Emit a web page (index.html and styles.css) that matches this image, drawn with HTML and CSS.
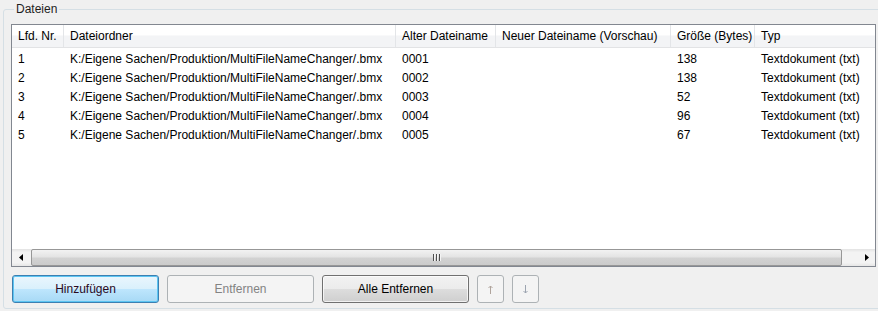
FILE: index.html
```html
<!DOCTYPE html>
<html lang="de">
<head>
    <meta charset="UTF-8">
    <title>Dateien</title>
    <link rel="stylesheet" href="styles.css">
</head>
<body>
    <fieldset class="group">
        <legend>Dateien</legend>
        <div class="listbox">
            <div class="list-head">
                <div class="col c1">Lfd. Nr.</div>
                <div class="col c2">Dateiordner</div>
                <div class="col c3">Alter Dateiname</div>
                <div class="col c4">Neuer Dateiname (Vorschau)</div>
                <div class="col c5">Größe (Bytes)</div>
                <div class="col c6">Typ</div>
            </div>
            <div class="list-body">
                <div class="row">
                    <div class="col c1">1</div>
                    <div class="col c2">K:/Eigene Sachen/Produktion/MultiFileNameChanger/.bmx</div>
                    <div class="col c3">0001</div>
                    <div class="col c4"></div>
                    <div class="col c5">138</div>
                    <div class="col c6">Textdokument (txt)</div>
                </div>
                <div class="row">
                    <div class="col c1">2</div>
                    <div class="col c2">K:/Eigene Sachen/Produktion/MultiFileNameChanger/.bmx</div>
                    <div class="col c3">0002</div>
                    <div class="col c4"></div>
                    <div class="col c5">138</div>
                    <div class="col c6">Textdokument (txt)</div>
                </div>
                <div class="row">
                    <div class="col c1">3</div>
                    <div class="col c2">K:/Eigene Sachen/Produktion/MultiFileNameChanger/.bmx</div>
                    <div class="col c3">0003</div>
                    <div class="col c4"></div>
                    <div class="col c5">52</div>
                    <div class="col c6">Textdokument (txt)</div>
                </div>
                <div class="row">
                    <div class="col c1">4</div>
                    <div class="col c2">K:/Eigene Sachen/Produktion/MultiFileNameChanger/.bmx</div>
                    <div class="col c3">0004</div>
                    <div class="col c4"></div>
                    <div class="col c5">96</div>
                    <div class="col c6">Textdokument (txt)</div>
                </div>
                <div class="row">
                    <div class="col c1">5</div>
                    <div class="col c2">K:/Eigene Sachen/Produktion/MultiFileNameChanger/.bmx</div>
                    <div class="col c3">0005</div>
                    <div class="col c4"></div>
                    <div class="col c5">67</div>
                    <div class="col c6">Textdokument (txt)</div>
                </div>
            </div>
            <div class="hscroll">
                <div class="sb-btn">
                    <svg width="4" height="7" viewBox="0 0 4 7"><path d="M4 0 L0 3.5 L4 7 Z" fill="#000"/></svg>
                </div>
                <div class="sb-track">
                    <div class="sb-thumb">
                        <span class="grip"></span><span class="grip"></span><span class="grip"></span>
                    </div>
                </div>
                <div class="sb-btn">
                    <svg width="4" height="7" viewBox="0 0 4 7"><path d="M0 0 L4 3.5 L0 7 Z" fill="#000"/></svg>
                </div>
            </div>
        </div>
        <div class="buttons">
            <button class="btn default">Hinzufügen</button>
            <button class="btn" disabled>Entfernen</button>
            <button class="btn">Alle Entfernen</button>
            <button class="btn small" disabled>
                <svg width="5" height="9" viewBox="0 0 5 9"><path d="M2.5 1 V9 M0.5 3 L2.5 1 L4.5 3" stroke="#b0a49c" fill="none"/></svg>
            </button>
            <button class="btn small" disabled>
                <svg width="5" height="9" viewBox="0 0 5 9"><path d="M2.5 0 V8 M0.5 6 L2.5 8 L4.5 6" stroke="#9ca4b0" fill="none"/></svg>
            </button>
        </div>
    </fieldset>
</body>
</html>
```

FILE: styles.css
```css
body {
    margin: 0;
    background: #f0f0f0;
    font-family: "Liberation Sans", Arial, sans-serif;
    font-size: 12px;
    color: #000;
}
.group {
    margin: 2px 4px 2px 3px;
    padding: 7px 7px 7px 7px;
    height: 307px;
    box-sizing: border-box;
    border: 1px solid #d5dfe5;
    border-radius: 3px;
    display: flex;
    flex-direction: column;
}
.group legend {
    padding: 0 2px;
    margin-left: 3px;
    line-height: 15px;
    color: #1e1e1e;
}
.listbox {
    flex: none;
    height: 243px;
    box-sizing: border-box;
    border: 1px solid #828790;
    background: #fff;
    display: flex;
    flex-direction: column;
}
.list-head {
    display: flex;
    height: 22px;
    background: linear-gradient(#ffffff, #ffffff 45%, #f3f4f6 50%, #f3f4f6);
    border-bottom: 1px solid #e2e3e5;
    line-height: 22px;
    white-space: nowrap;
    overflow: hidden;
}
.list-head .col {
    border-right: 1px solid #e3e5e8;
}
.list-body {
    flex: 1;
    padding-top: 2px;
    white-space: nowrap;
    overflow: hidden;
}
.row {
    display: flex;
    height: 19px;
    line-height: 19px;
}
.col {
    flex: none;
    box-sizing: border-box;
    padding-left: 6px;
    overflow: hidden;
}
.c1 { width: 52px; }
.c2 { width: 332px; }
.c3 { width: 100px; }
.c4 { width: 175px; }
.c5 { width: 84px; }
.c6 { width: 120px; }
.list-head .c6 { border-right: none; }

.hscroll {
    flex: none;
    display: flex;
    height: 17px;
    background: linear-gradient(#e3e3e3, #f3f3f3 20%, #f3f3f3 80%, #e6e6e6);
}
.sb-btn {
    width: 17px;
    flex: none;
    display: flex;
    align-items: center;
    justify-content: center;
}
.sb-track {
    flex: 1;
    display: flex;
    padding: 0 16px 0 2px;
}
.sb-thumb {
    flex: 1;
    box-sizing: border-box;
    border: 1px solid #979797;
    border-radius: 2px;
    background: linear-gradient(#f2f2f2, #e4e4e4 45%, #d2d2d2 55%, #cbcbcb);
    display: flex;
    justify-content: center;
    align-items: center;
    gap: 1px;
}
.grip {
    width: 1px;
    height: 7px;
    background: #4f4f4f;
    border-right: 1px solid #f4f4f4;
}

.buttons {
    display: flex;
    gap: 8px;
    margin-top: 8px;
    margin-left: 1px;
}
.btn {
    width: 147px;
    height: 28px;
    font-family: inherit;
    font-size: 12px;
    color: #000;
    border: 1px solid #707070;
    border-radius: 3px;
    background: linear-gradient(#f2f2f2, #ebebeb 50%, #dddddd 50%, #cfcfcf);
    box-shadow: inset 0 0 0 1px rgba(255, 255, 255, 0.7);
    padding: 0;
}
.btn.default {
    border-color: #3c7fb1;
    background: linear-gradient(#eaf6fd, #d9f0fc 50%, #bee6fd 50%, #a7d9f5);
    box-shadow: inset 0 0 0 1px #5cc5f2;
    color: #2a0a1e;
}
.btn:disabled {
    border-color: #adb2b5;
    background: #f4f4f4;
    color: #838383;
    box-shadow: none;
}
.btn.small {
    width: 27px;
    display: flex;
    align-items: center;
    justify-content: center;
}
```
